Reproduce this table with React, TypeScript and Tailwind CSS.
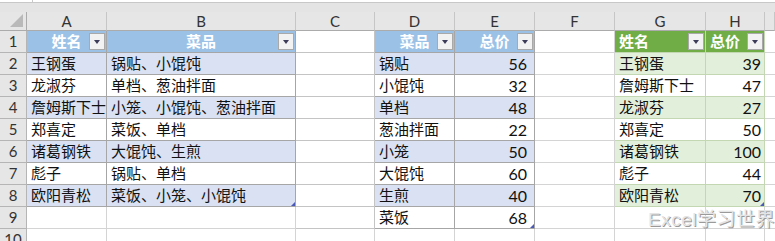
import type { ReactNode } from "react";

const cols = ["A", "B", "C", "D", "E", "F", "G", "H", ""];

const names = ["王钢蛋", "龙淑芬", "詹姆斯下士", "郑喜定", "诸葛钢铁", "彪子", "欧阳青松"];
const dishes = ["锅贴、小馄饨", "单档、葱油拌面", "小笼、小馄饨、葱油拌面", "菜饭、单档", "大馄饨、生煎", "锅贴、单档", "菜饭、小笼、小馄饨"];
const prices = [
  ["锅贴", "56"],
  ["小馄饨", "32"],
  ["单档", "48"],
  ["葱油拌面", "22"],
  ["小笼", "50"],
  ["大馄饨", "60"],
  ["生煎", "40"],
  ["菜饭", "68"],
];
const totals = [
  ["王钢蛋", "39"],
  ["詹姆斯下士", "47"],
  ["龙淑芬", "27"],
  ["郑喜定", "50"],
  ["诸葛钢铁", "100"],
  ["彪子", "44"],
  ["欧阳青松", "70"],
];

function Drop() {
  return (
    <span className="absolute right-[1px] top-[2px] flex h-[17px] w-[16px] items-center justify-center border border-[#a9a9a9] bg-[#f2f2f2]">
      <span className="h-0 w-0 border-x-[3px] border-t-[4px] border-x-transparent border-t-[#3c3c5a]" />
    </span>
  );
}

function Handle() {
  return (
    <span className="absolute bottom-0 right-0 h-0 w-0 border-b-[4px] border-l-[4px] border-b-[#4a58b8] border-l-transparent" />
  );
}

interface CellProps {
  children?: ReactNode;
  bg?: string;
  line?: string;
  right?: boolean;
  center?: boolean;
  head?: boolean;
  drop?: boolean;
  handle?: boolean;
  pr?: string;
}

function Cell({ children, bg = "bg-white", line = "border-[#d4d4d4]", right, center, head, drop, handle, pr = "pr-[4px]" }: CellProps) {
  return (
    <div
      className={`relative flex h-[22px] items-center overflow-visible whitespace-nowrap border-b border-r pl-[4px] ${pr} ${bg} ${line} ${
        right ? "justify-end" : center ? "justify-center" : "justify-start"
      } ${head ? "font-bold text-white" : "text-[#111]"}`}
    >
      {children}
      {drop && <Drop />}
      {handle && <Handle />}
    </div>
  );
}

function RowNum({ n }: { n: number }) {
  return (
    <div className="flex h-[22px] items-center justify-center border-b border-r border-[#b5b5b5] bg-[#e6e6e6] text-[#333]">
      {n}
    </div>
  );
}

export default function App() {
  const blueLine = "border-[#a6a6a6]";
  const greenLine = "border-[#c3d8b2]";

  const rows = [];
  for (let r = 1; r <= 10; r++) {
    const i = r - 2;
    const blueBand = r % 2 === 0 ? "bg-[#d9e1f2]" : "bg-white";
    const greenBand = r % 2 === 0 ? "bg-[#e2efda]" : "bg-white";
    rows.push(<RowNum key={`n${r}`} n={r} />);

    // A, B
    if (r === 1) {
      rows.push(
        <Cell key="a1" bg="bg-[#9bc2e6]" line={blueLine} center head drop>姓名</Cell>,
        <Cell key="b1" bg="bg-[#9bc2e6]" line={blueLine} center head drop>菜品</Cell>
      );
    } else if (r <= 8) {
      rows.push(
        <Cell key={`a${r}`} bg={blueBand} line={blueLine}>{names[i]}</Cell>,
        <Cell key={`b${r}`} bg={blueBand} line={blueLine} handle={r === 8}>{dishes[i]}</Cell>
      );
    } else {
      rows.push(<Cell key={`a${r}`} />, <Cell key={`b${r}`} />);
    }

    // C
    rows.push(<Cell key={`c${r}`} line={r <= 9 ? "border-[#c4c4c4]" : "border-[#d4d4d4]"} />);

    // D, E
    if (r === 1) {
      rows.push(
        <Cell key="d1" bg="bg-[#9bc2e6]" line={blueLine} center head drop>菜品</Cell>,
        <Cell key="e1" bg="bg-[#9bc2e6]" line={blueLine} center head drop>总价</Cell>
      );
    } else if (r <= 9) {
      rows.push(
        <Cell key={`d${r}`} bg={blueBand} line={blueLine}>{prices[i][0]}</Cell>,
        <Cell key={`e${r}`} bg={blueBand} line={blueLine} right pr="pr-[7px]" handle={r === 9}>
          <span className="text-[16px]">{prices[i][1]}</span>
        </Cell>
      );
    } else {
      rows.push(<Cell key={`d${r}`} />, <Cell key={`e${r}`} />);
    }

    // F
    rows.push(<Cell key={`f${r}`} />);

    // G, H
    if (r === 1) {
      rows.push(
        <Cell key="g1" bg="bg-[#70ad47]" line={greenLine} head drop>姓名</Cell>,
        <Cell key="h1" bg="bg-[#70ad47]" line={greenLine} head drop>总价</Cell>
      );
    } else if (r <= 8) {
      rows.push(
        <Cell key={`g${r}`} bg={greenBand} line={greenLine}>{totals[i][0]}</Cell>,
        <Cell key={`h${r}`} bg={greenBand} line={greenLine} right pr="pr-[3px]" handle={r === 8}>
          <span className="text-[16px]">{totals[i][1]}</span>
        </Cell>
      );
    } else {
      rows.push(<Cell key={`g${r}`} />, <Cell key={`h${r}`} />);
    }

    rows.push(<div key={`i${r}`} className="h-[22px] border-b border-[#d4d4d4] bg-white" />);
  }

  return (
    <div className="relative h-[241px] w-[775px] overflow-hidden bg-white text-[15px] leading-none font-['Lato','Noto_Sans_CJK_SC',sans-serif]">
      {/* formula bar remnant */}
      <div className="flex h-[12px] flex-col bg-[#e4e4e4]">
        <div className="flex h-[3px]">
          <div className="w-[33px] border-r border-b border-[#c8c8c8] bg-white" />
          <div className="flex-1 border-b border-[#c8c8c8] bg-white" />
        </div>
      </div>

      <div className="grid grid-cols-[27px_80px_189px_79px_80px_80px_80px_91px_59px_10px]">
        {/* column header row */}
        <div className="relative h-[19px] border-b border-r border-[#ababab] bg-[#e6e6e6]">
          <span className="absolute bottom-[3px] right-[3px] h-0 w-0 border-b-[13px] border-l-[13px] border-b-[#b9b9b9] border-l-transparent" />
        </div>
        {cols.map((c, k) => (
          <div
            key={`h${k}`}
            className="flex h-[19px] items-center justify-center border-b border-r border-b-[#ababab] border-r-[#c6c6c6] bg-[#e6e6e6] text-[#333]"
          >
            {c}
          </div>
        ))}
        {rows}
      </div>

      <div className="absolute left-[648px] top-[210px] text-[19px] tracking-[0.5px] text-[#e4e4e4] font-['Liberation_Sans','Noto_Sans_CJK_SC',sans-serif] [text-shadow:1px_1px_0_#9a9a9a]">
        Excel学习世界
      </div>
    </div>
  );
}
